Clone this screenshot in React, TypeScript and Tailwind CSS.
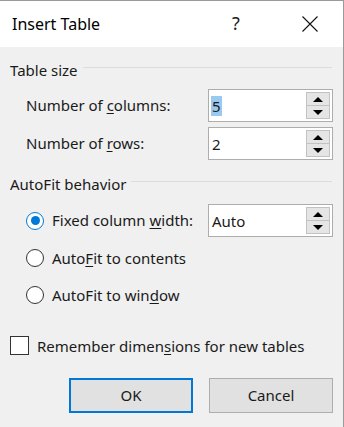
import React from 'react';

const font = { fontFamily: '"Noto Sans", "Open Sans", sans-serif' };

const U: React.FC<{ children: React.ReactNode }> = ({ children }) => (
  <span className="underline underline-offset-2 decoration-1">{children}</span>
);

const Spinner: React.FC<{ value: string; selected?: boolean }> = ({ value, selected }) => (
  <div className="w-[125px] h-[33px] bg-white border border-[#adadad] flex items-center justify-between pl-[2px] pr-[2px]">
    <span className={`text-[15px] leading-[20px] text-[#1a1a1a] ${selected ? 'bg-[#99c9ef] px-[1px]' : 'pl-[1px]'}`}>
      {value}
    </span>
    <div className="flex flex-col w-[24px] h-[27px]">
      <div className="flex-1 flex items-center justify-center bg-[#e5e5e5] border border-[#c2c2c2]">
        <svg width="10" height="5" viewBox="0 0 10 5"><path d="M0 5 L5 0 L10 5 Z" fill="#000" /></svg>
      </div>
      <div className="flex-1 flex items-center justify-center bg-[#e5e5e5] border border-t-0 border-[#c2c2c2]">
        <svg width="10" height="5" viewBox="0 0 10 5"><path d="M0 0 L10 0 L5 5 Z" fill="#000" /></svg>
      </div>
    </div>
  </div>
);

const Radio: React.FC<{ checked?: boolean }> = ({ checked }) => (
  <div
    className={`w-[18px] h-[18px] rounded-full bg-white border-[1.5px] flex items-center justify-center ${
      checked ? 'border-[#0078d7]' : 'border-[#333333]'
    }`}
  >
    {checked && <div className="w-[9px] h-[9px] rounded-full bg-[#0078d7]" />}
  </div>
);

const GroupHeader: React.FC<{ title: string }> = ({ title }) => (
  <div className="flex items-center h-[20px] pl-[10px] pr-[11px] gap-[5px]">
    <span className="text-[15px] text-[#1a1a1a] whitespace-nowrap">{title}</span>
    <div className="flex-1 h-px bg-[#dcdcdc] -mt-[5px]" />
  </div>
);

export default function App() {
  return (
    <div style={font} className="w-[344px] h-[427px] bg-[#f0f0f0] border-t border-r border-[#9a9a9a] overflow-hidden text-[#1a1a1a]">
      {/* Title bar */}
      <div className="h-[46px] bg-white flex items-center pl-[12px]">
        <span className="text-[16px] text-black flex-1 -mt-[1px]">Insert Table</span>
        <span className="text-[18px] text-[#222] w-[10px] mr-[60px] -mt-[1px]">?</span>
        <svg width="16" height="16" viewBox="0 0 16 16" className="mr-[25px]">
          <path d="M0.5 0.5 L15.5 15.5 M15.5 0.5 L0.5 15.5" stroke="#111" strokeWidth="1.1" />
        </svg>
      </div>

      {/* Table size */}
      <div className="mt-[13px]">
        <GroupHeader title="Table size" />
        <div className="mt-[9px] flex flex-col gap-[5px] pl-[26px]">
          <div className="flex items-center">
            <span className="w-[182px] text-[15px]">Number of <U>c</U>olumns:</span>
            <Spinner value="5" selected />
          </div>
          <div className="flex items-center">
            <span className="w-[182px] text-[15px]">Number of <U>r</U>ows:</span>
            <Spinner value="2" />
          </div>
        </div>
      </div>

      {/* AutoFit behavior */}
      <div className="mt-[14px]">
        <GroupHeader title="AutoFit behavior" />
        <div className="mt-[10px] pl-[26px]">
          <div className="flex items-center">
            <Radio checked />
            <span className="ml-[8px] w-[156px] text-[15px]">Fixed column <U>w</U>idth:</span>
            <Spinner value="Auto" />
          </div>
          <div className="flex items-center mt-[9px] h-[24px]">
            <Radio />
            <span className="ml-[8px] text-[15px]">Auto<U>F</U>it to contents</span>
          </div>
          <div className="flex items-center mt-[13px] h-[24px]">
            <Radio />
            <span className="ml-[8px] text-[15px]">AutoFit to win<U>d</U>ow</span>
          </div>
        </div>
      </div>

      {/* Remember */}
      <div className="mt-[26px] pl-[10px] flex items-center">
        <div className="w-[19px] h-[19px] bg-white border border-[#333333]" />
        <span className="ml-[8px] text-[15px] mt-[2px]">Remember dimen<U>s</U>ions for new tables</span>
      </div>

      {/* Buttons */}
      <div className="mt-[20px] flex justify-end gap-[16px] pr-[10px]">
        <button className="w-[124px] h-[35px] bg-[#e1e1e1] border-2 border-[#0078d7] text-[15px] text-[#1a1a1a]">
          OK
        </button>
        <button className="w-[124px] h-[35px] bg-[#e1e1e1] border border-[#adadad] text-[15px] text-[#1a1a1a]">
          Cancel
        </button>
      </div>
    </div>
  );
}
